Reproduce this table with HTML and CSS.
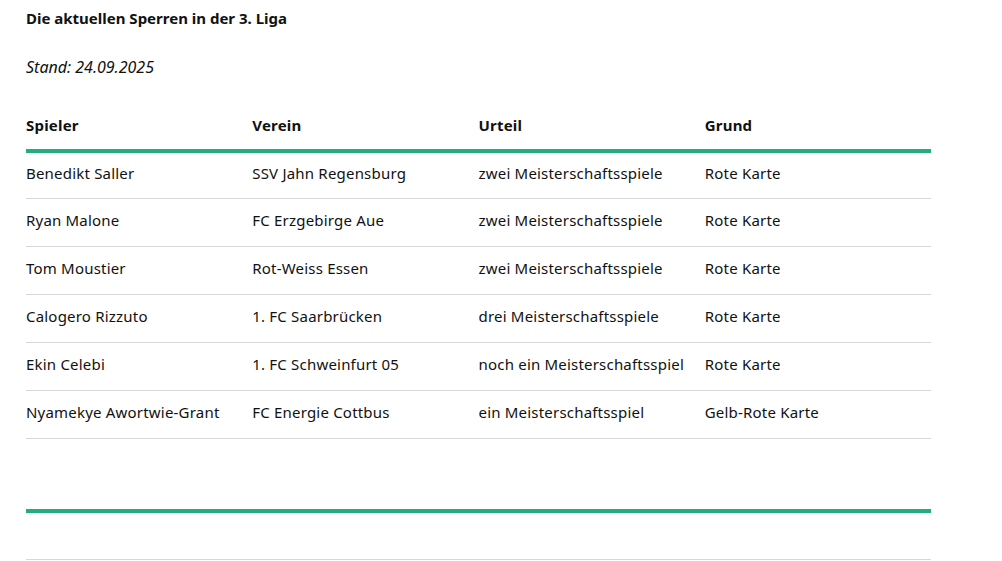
FILE: index.html
```html
<!DOCTYPE html>
<html lang="de">
<head>
    <meta charset="UTF-8">
    <meta name="viewport" content="width=device-width, initial-scale=1.0">
    <title>Sperren 3. Liga</title>
    <link rel="stylesheet" href="styles.css">
</head>
<body>
    <div class="content">
        <h2 class="title">Die aktuellen Sperren in der 3. Liga</h2>
        <p class="stand">Stand: 24.09.2025</p>

        <table class="sperren players">
            <thead>
                <tr>
                    <th>Spieler</th>
                    <th>Verein</th>
                    <th>Urteil</th>
                    <th>Grund</th>
                </tr>
            </thead>
            <tbody>
                <tr>
                    <td>Benedikt Saller</td>
                    <td>SSV Jahn Regensburg</td>
                    <td>zwei Meisterschaftsspiele</td>
                    <td>Rote Karte</td>
                </tr>
                <tr>
                    <td>Ryan Malone</td>
                    <td>FC Erzgebirge Aue</td>
                    <td>zwei Meisterschaftsspiele</td>
                    <td>Rote Karte</td>
                </tr>
                <tr>
                    <td>Tom Moustier</td>
                    <td>Rot-Weiss Essen</td>
                    <td>zwei Meisterschaftsspiele</td>
                    <td>Rote Karte</td>
                </tr>
                <tr>
                    <td>Calogero Rizzuto</td>
                    <td>1. FC Saarbrücken</td>
                    <td>drei Meisterschaftsspiele</td>
                    <td>Rote Karte</td>
                </tr>
                <tr>
                    <td>Ekin Celebi</td>
                    <td>1. FC Schweinfurt 05</td>
                    <td>noch ein Meisterschaftsspiel</td>
                    <td>Rote Karte</td>
                </tr>
                <tr>
                    <td>Nyamekye Awortwie-Grant</td>
                    <td>FC Energie Cottbus</td>
                    <td>ein Meisterschaftsspiel</td>
                    <td>Gelb-Rote Karte</td>
                </tr>
            </tbody>
        </table>

        <table class="sperren empty">
            <thead>
                <tr>
                    <th></th>
                </tr>
            </thead>
            <tbody>
                <tr>
                    <td></td>
                </tr>
            </tbody>
        </table>
    </div>
</body>
</html>
```

FILE: styles.css
```css
body {
    margin: 0;
    font-family: "Noto Sans", Arial, sans-serif;
    color: #111;
    background-color: #fff;
}

.content {
    width: 905px;
    padding: 0 26px;
}

.title {
    font-size: 15px;
    font-weight: bold;
    line-height: 20px;
    margin: 8px 0 0 0;
}

.stand {
    font-size: 16px;
    font-style: italic;
    line-height: 20px;
    margin: 29px 0 0 0;
}

.sperren {
    width: 905px;
    border-collapse: collapse;
    table-layout: fixed;
    font-size: 15px;
    letter-spacing: 0.2px;
}

.sperren th {
    text-align: left;
    font-weight: bold;
    height: 40px;
    padding: 0 0 4px 0;
    border-bottom: 4px solid #21ad7d;
    vertical-align: middle;
}

.sperren td {
    height: 42px;
    padding: 0 0 5px 0;
    border-bottom: 1px solid #d7d7de;
    vertical-align: middle;
}

.players {
    margin-top: 28px;
}

.players tbody tr:first-child td {
    height: 40px;
}

.sperren.empty {
    margin-top: 26px;
}

.sperren.empty td {
    height: 41px;
}
```
